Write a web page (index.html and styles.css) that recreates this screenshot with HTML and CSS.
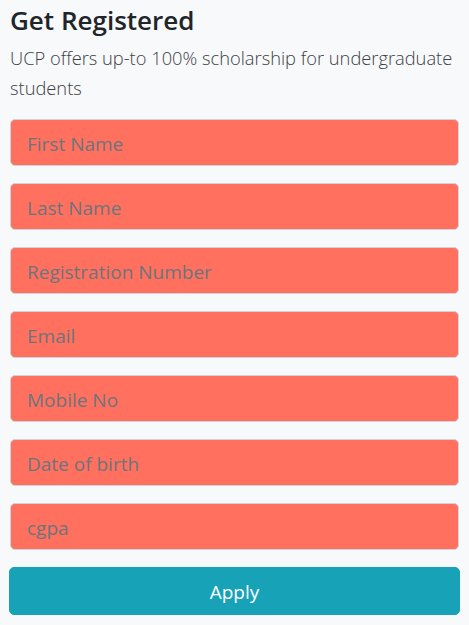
FILE: index.html
```html
<!DOCTYPE html>
<html>
<head>
<meta charset="utf-8">
<link rel="stylesheet" href="styles.css">
</head>
<body>
<div class="wrap">
  <h4 class="title">Get Registered</h4>
  <p class="lead">UCP offers up-to 100% scholarship for undergraduate students</p>
  <form class="form">
    <input class="field" type="text" placeholder="First Name">
    <input class="field" type="text" placeholder="Last Name">
    <input class="field" type="text" placeholder="Registration Number">
    <input class="field" type="text" placeholder="Email">
    <input class="field" type="text" placeholder="Mobile No">
    <input class="field" type="text" placeholder="Date of birth">
    <input class="field" type="text" placeholder="cgpa">
    <button class="apply" type="button">Apply</button>
  </form>
</div>
</body>
</html>
```
FILE: styles.css
```css
html, body {
  margin: 0;
  padding: 0;
  background: #f8f9fa;
}
body {
  font-family: "Open Sans", "Noto Sans", "DejaVu Sans", sans-serif;
  color: #212529;
}
.wrap {
  padding: 5px 9px 0 9px;
  width: 451px;
}
.title {
  margin: 0 0 8px 1px;
  font-size: 26px;
  font-weight: 600;
  line-height: 30px;
  color: #212529;
}
.lead {
  margin: 0 0 16px 1px;
  font-size: 18.3px;
  font-weight: 300;
  line-height: 30px;
  color: #3d4145;
}
.form {
  display: flex;
  flex-direction: column;
  gap: 17px;
}
.field {
  box-sizing: border-box;
  margin-left: 1px;
  width: 449px;
  height: 47px;
  padding: 3px 16px 0 16px;
  border: 1px solid #ced4da;
  border-radius: 5px;
  background: #ff705e;
  font-family: inherit;
  font-size: 19px;
  color: #495057;
  outline: none;
}
.field::placeholder {
  color: #6c757d;
  opacity: 1;
}
.apply {
  box-sizing: border-box;
  width: 451px;
  height: 48px;
  border: 1px solid #17a2b8;
  border-radius: 5px;
  background: #17a2b8;
  color: #fff;
  font-family: inherit;
  font-size: 19px;
  padding: 2px 0 0 0;
}
```
